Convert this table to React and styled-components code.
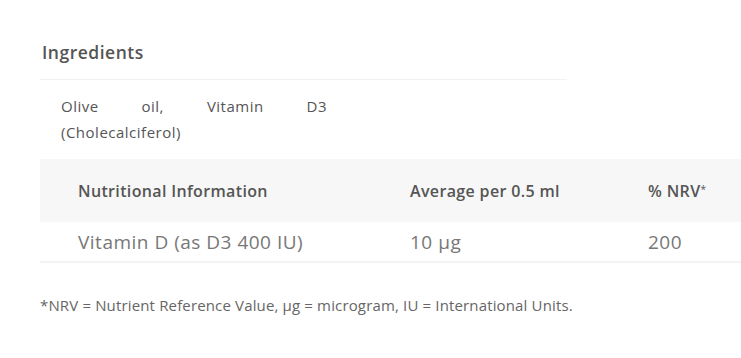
import React from "react";
import styled, { createGlobalStyle } from "styled-components";

const GlobalStyle = createGlobalStyle`
  body {
    margin: 0;
    background: #fff;
    font-family: "Open Sans", "Liberation Sans", sans-serif;
    color: #555;
  }
`;

const rows = [
  { name: "Vitamin D (as D3 400 IU)", amount: "10 µg", nrv: "200" },
];

function App() {
  return (
    <>
      <GlobalStyle />
      <Page>
        <Section>
          <Heading>Ingredients</Heading>
          <Ingredients>
            <p>Olive oil, Vitamin D3 (Cholecalciferol)</p>
          </Ingredients>
        </Section>
        <Table>
          <thead>
            <tr>
              <Th>Nutritional Information</Th>
              <Th>Average per 0.5 ml</Th>
              <Th>
                % NRV<sup>*</sup>
              </Th>
            </tr>
          </thead>
          <tbody>
            {rows.map((r) => (
              <tr key={r.name}>
                <Td>{r.name}</Td>
                <Td>{r.amount}</Td>
                <Td>{r.nrv}</Td>
              </tr>
            ))}
          </tbody>
        </Table>
        <Footnote>
          *NRV = Nutrient Reference Value, µg = microgram, IU = International Units.
        </Footnote>
      </Page>
    </>
  );
}

const Page = styled.div`
  padding: 39px 0 0 40px;
`;

const Section = styled.div`
  width: 527px;
`;

const Heading = styled.h3`
  margin: 0;
  padding: 0 0 14px 2px;
  font-size: 17.5px;
  font-weight: 600;
  letter-spacing: 0.5px;
  color: #555;
  line-height: 26px;
  border-bottom: 1px solid #f2f2f2;
`;

const Ingredients = styled.div`
  padding: 13px 0 0 21px;
  p {
    margin: 0;
    width: 266px;
    text-align: justify;
    font-size: 15px;
    letter-spacing: 0.5px;
    line-height: 26px;
    color: #555;
  }
`;

const Table = styled.table`
  margin-top: 14px;
  width: 701px;
  border-collapse: collapse;
  table-layout: fixed;

  th:nth-child(1), td:nth-child(1) { width: 332px; padding-left: 38px; }
  th:nth-child(2), td:nth-child(2) { width: 238px; }
`;

const Th = styled.th`
  background: #f7f7f7;
  height: 63px;
  text-align: left;
  font-size: 16px;
  font-weight: 600;
  letter-spacing: 0.35px;
  color: #555;
  padding: 0;

  sup {
    font-size: 10px;
    font-weight: 400;
    vertical-align: 4px;
  }
`;

const Td = styled.td`
  height: 39px;
  padding: 0;
  font-size: 19px;
  letter-spacing: 0.5px;
  color: #777;
  border-bottom: 2px solid #f3f3f3;
`;

const Footnote = styled.p`
  margin: 32px 0 0;
  font-size: 15px;
  letter-spacing: 0.15px;
  line-height: 20px;
  color: #666;
`;

export default App;
